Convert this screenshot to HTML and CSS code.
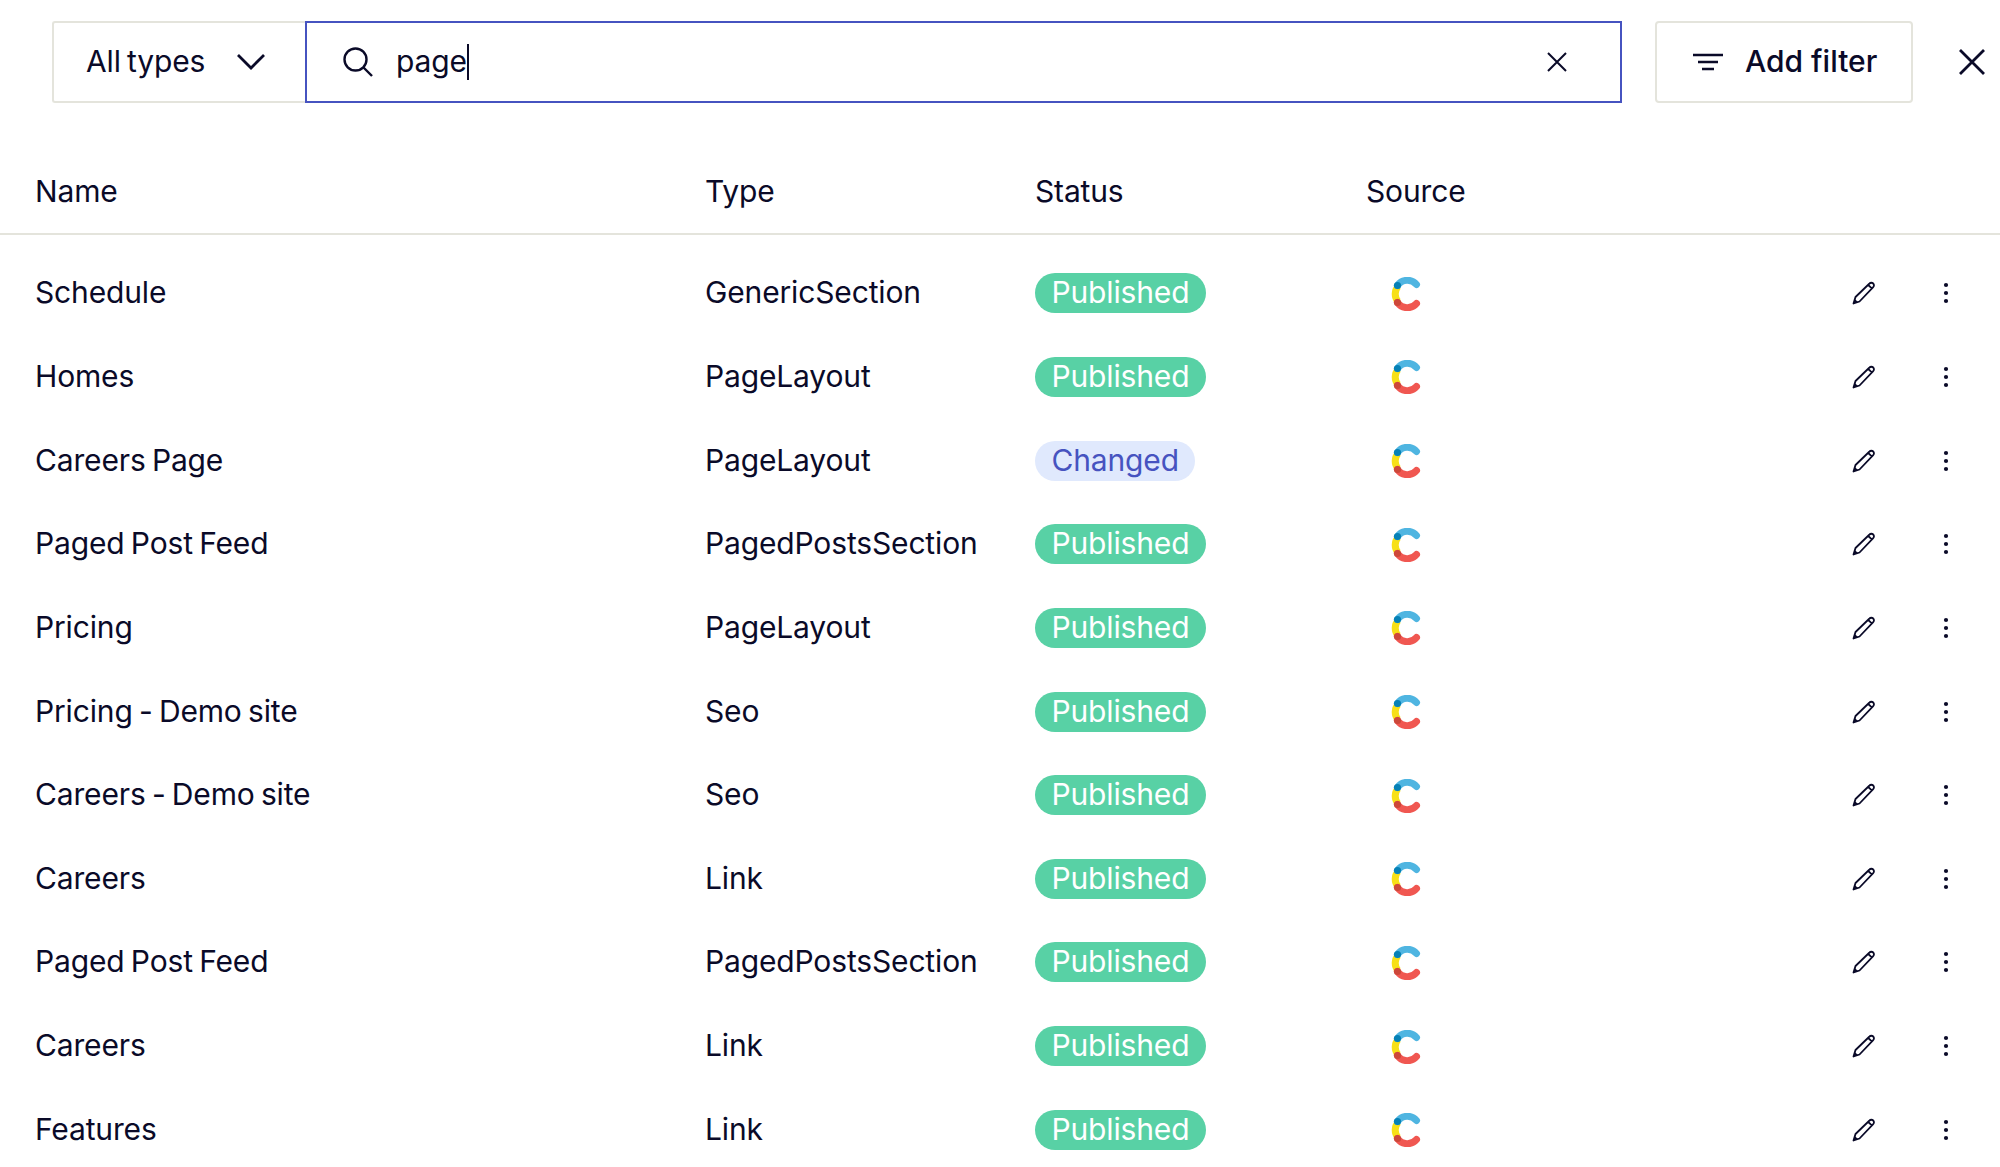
FILE: index.html
```html
<!DOCTYPE html>
<html lang="en">
<head>
<meta charset="utf-8">
<title>Entries</title>
<link rel="stylesheet" href="styles.css">
</head>
<body>
<svg class="defs" width="0" height="0" aria-hidden="true">
  <symbol id="logo" viewBox="0 0 30 34">
    <path d="M7 9.5A11.5 11.5 0 0 0 7 24.5" fill="none" stroke="#f7e017" stroke-width="7"/>
    <path d="M6.5 8.5A12 12 0 0 1 25.5 7.5" fill="none" stroke="#4fb5e1" stroke-width="7" stroke-linecap="round"/>
    <path d="M6.5 25.5A12 12 0 0 0 25.5 26.5" fill="none" stroke="#f05751" stroke-width="7" stroke-linecap="round"/>
    <circle cx="6.5" cy="8.5" r="3.6" fill="#0681b6"/>
    <circle cx="6.5" cy="25.5" r="3.6" fill="#cd4739"/>
  </symbol>
  <symbol id="pencil" viewBox="0 0 24 24">
    <path d="M1.5 22.5 3.5 16 17.5 2.5a2.6 2.6 0 0 1 3.7 0 2.6 2.6 0 0 1 0 3.7L7.5 20.5ZM16.2 3.8l4 4" fill="none" stroke="#0a0a28" stroke-width="1.8" stroke-linejoin="round"/>
    <path d="M1.5 22.5 2.8 18 6 21Z" fill="#0a0a28"/>
  </symbol>
  <symbol id="dots" viewBox="0 0 8 24">
    <circle cx="4" cy="4" r="2.1" fill="#0a0a28"/><circle cx="4" cy="12" r="2.1" fill="#0a0a28"/><circle cx="4" cy="20" r="2.1" fill="#0a0a28"/>
  </symbol>
</svg>
<header class="toolbar">
  <div class="select">
    <span class="label">All types</span>
    <svg class="chevron" viewBox="0 0 30 18"><path d="M2 2 15 15 28 2" fill="none" stroke="#0a0a28" stroke-width="2.8"/></svg>
  </div>
  <div class="search">
    <svg class="search-icon" viewBox="0 0 32 32"><circle cx="13.5" cy="13.5" r="11" fill="none" stroke="#0a0a28" stroke-width="2.4"/><path d="M21.5 21.5 30 30" fill="none" stroke="#0a0a28" stroke-width="2.4"/></svg>
    <span class="label">page</span><span class="caret"></span>
    <svg class="clear" viewBox="0 0 20 20"><path d="M1 1 19 19M19 1 1 19" fill="none" stroke="#0a0a28" stroke-width="2"/></svg>
  </div>
  <div class="add-filter">
    <svg class="filter-icon" viewBox="0 0 30 18"><path d="M0 2H30M5 9H25M9 16H21" fill="none" stroke="#0a0a28" stroke-width="2.6"/></svg>
    <span class="label">Add filter</span>
  </div>
  <svg class="close" viewBox="0 0 26 26"><path d="M1 1 25 25M25 1 1 25" fill="none" stroke="#0a0a28" stroke-width="2.8"/></svg>
</header>
<main class="table">
  <div class="row head"><div>Name</div><div>Type</div><div>Status</div><div>Source</div></div>
  <div class="body">
    <div class="row"><div class="cell">Schedule</div><div class="cell">GenericSection</div><div><span class="pill pub">Published</span></div><div><svg class="logo"><use href="#logo"/></svg></div><svg class="pencil"><use href="#pencil"/></svg><svg class="dots"><use href="#dots"/></svg></div>
    <div class="row"><div class="cell">Homes</div><div class="cell">PageLayout</div><div><span class="pill pub">Published</span></div><div><svg class="logo"><use href="#logo"/></svg></div><svg class="pencil"><use href="#pencil"/></svg><svg class="dots"><use href="#dots"/></svg></div>
    <div class="row"><div class="cell">Careers Page</div><div class="cell">PageLayout</div><div><span class="pill chg">Changed</span></div><div><svg class="logo"><use href="#logo"/></svg></div><svg class="pencil"><use href="#pencil"/></svg><svg class="dots"><use href="#dots"/></svg></div>
    <div class="row"><div class="cell">Paged Post Feed</div><div class="cell">PagedPostsSection</div><div><span class="pill pub">Published</span></div><div><svg class="logo"><use href="#logo"/></svg></div><svg class="pencil"><use href="#pencil"/></svg><svg class="dots"><use href="#dots"/></svg></div>
    <div class="row"><div class="cell">Pricing</div><div class="cell">PageLayout</div><div><span class="pill pub">Published</span></div><div><svg class="logo"><use href="#logo"/></svg></div><svg class="pencil"><use href="#pencil"/></svg><svg class="dots"><use href="#dots"/></svg></div>
    <div class="row"><div class="cell">Pricing - Demo site</div><div class="cell">Seo</div><div><span class="pill pub">Published</span></div><div><svg class="logo"><use href="#logo"/></svg></div><svg class="pencil"><use href="#pencil"/></svg><svg class="dots"><use href="#dots"/></svg></div>
    <div class="row"><div class="cell">Careers - Demo site</div><div class="cell">Seo</div><div><span class="pill pub">Published</span></div><div><svg class="logo"><use href="#logo"/></svg></div><svg class="pencil"><use href="#pencil"/></svg><svg class="dots"><use href="#dots"/></svg></div>
    <div class="row"><div class="cell">Careers</div><div class="cell">Link</div><div><span class="pill pub">Published</span></div><div><svg class="logo"><use href="#logo"/></svg></div><svg class="pencil"><use href="#pencil"/></svg><svg class="dots"><use href="#dots"/></svg></div>
    <div class="row"><div class="cell">Paged Post Feed</div><div class="cell">PagedPostsSection</div><div><span class="pill pub">Published</span></div><div><svg class="logo"><use href="#logo"/></svg></div><svg class="pencil"><use href="#pencil"/></svg><svg class="dots"><use href="#dots"/></svg></div>
    <div class="row"><div class="cell">Careers</div><div class="cell">Link</div><div><span class="pill pub">Published</span></div><div><svg class="logo"><use href="#logo"/></svg></div><svg class="pencil"><use href="#pencil"/></svg><svg class="dots"><use href="#dots"/></svg></div>
    <div class="row"><div class="cell">Features</div><div class="cell">Link</div><div><span class="pill pub">Published</span></div><div><svg class="logo"><use href="#logo"/></svg></div><svg class="pencil"><use href="#pencil"/></svg><svg class="dots"><use href="#dots"/></svg></div>
  </div>
</main>
</body>
</html>
```
FILE: styles.css
```css
* { box-sizing: border-box; }
html, body { height: 100%; }
body {
  margin: 0;
  overflow: hidden;
  background: #fff;
  color: #0a0a28;
  font-family: Inter, "Liberation Sans", sans-serif;
  font-size: 30px;
  letter-spacing: -0.15px;
  word-spacing: -2px;
}
.defs { display: block; height: 0; }
.toolbar {
  display: flex;
  align-items: center;
  height: 82px;
  margin: 21px 0 0 52px;
}
.label { margin-bottom: 2px; }
.select {
  width: 253px;
  height: 82px;
  display: flex;
  align-items: center;
  justify-content: space-between;
  padding: 0 39px 0 32px;
  border: 2px solid #e4e4dc;
  border-right: 0;
  border-radius: 3px 0 0 3px;
}
.chevron { width: 30px; height: 18px; }
.search {
  width: 1317px;
  height: 82px;
  display: flex;
  align-items: center;
  padding: 0 53px 0 35px;
  border: 2px solid #4653c0;
}
.search-icon { width: 32px; height: 32px; margin-right: 22px; }
.caret { width: 2px; height: 36px; background: #0a0a28; }
.clear { width: 20px; height: 20px; margin-left: auto; }
.add-filter {
  width: 258px;
  height: 82px;
  margin-left: 33px;
  display: flex;
  align-items: center;
  gap: 22px;
  padding-left: 36px;
  border: 2px solid #e4e4dc;
  border-radius: 4px;
  font-weight: 500;
  letter-spacing: 0;
  word-spacing: 0;
}
.filter-icon { width: 30px; height: 18px; }
.close { width: 26px; height: 26px; margin-left: 46px; }
.row {
  display: grid;
  grid-template-columns: 670px 330px 331px 486px 89px 8px;
  align-items: center;
  padding-left: 35px;
  height: 83.65px;
}
.head {
  height: 67px;
  margin-top: 65px;
  padding-bottom: 20px;
  border-bottom: 2px solid #e4e4dc;
}
.body { padding-top: 16px; }
.cell { margin-bottom: 1px; }
.pill {
  display: block;
  width: max-content;
  height: 40px;
  line-height: 38px;
  padding: 0 16.5px;
  margin-top: 1px;
  border-radius: 20px;
}
.pub { background: #58d1a5; color: #fff; }
.chg { background: #e0e9fd; color: #4653c0; }
.logo { display: block; width: 30px; height: 34px; margin: 2px 0 0 25px; }
.pencil { width: 24px; height: 24px; margin-top: 1px; }
.dots { width: 8px; height: 24px; margin: 1px 0 0 0.5px; }
```
